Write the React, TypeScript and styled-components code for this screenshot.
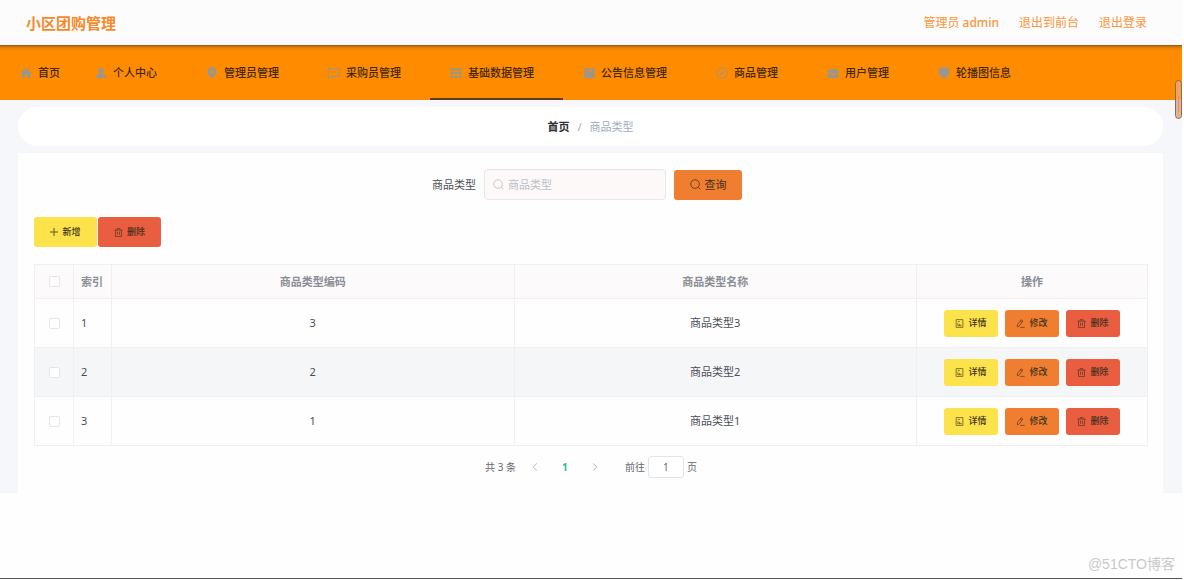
import React from "react";
import styled, { createGlobalStyle } from "styled-components";

const GlobalStyle = createGlobalStyle`
  * { box-sizing: border-box; }
  body {
    margin: 0;
    background: #fefefe;
    color: #4c4e53;
    font-family: "Noto Sans", "Noto Sans CJK SC", sans-serif;
    font-size: 11px;
    line-height: 16px;
  }
  button, input { font: inherit; }
  a { color: inherit; text-decoration: none; }
`;

const Page = styled.div`
  position: relative;
  display: flex;
  flex-direction: column;
  min-height: 100vh;
  padding-right: 2px;
`;

const Header = styled.header`
  display: flex;
  align-items: center;
  justify-content: space-between;
  height: 45px;
  padding: 0 35px 0 26px;
  background: #fcfcfd;
`;

const Brand = styled.h1`
  margin: 0;
  color: #f58a2b;
  font-size: 15px;
  font-weight: 700;
`;

const Account = styled.div`
  display: flex;
  gap: 20px;
  padding-top: 1px;
  color: #f9953c;
  font-size: 12px;
`;

const AdminName = styled.span`
  font-weight: 500;
`;

const Nav = styled.nav`
  display: flex;
  height: 55px;
  background: linear-gradient(#875714 0, #d97a0a 2px, #f58803 4px, #ff8c00 7px);
`;

const NavItem = styled.a<{ $active?: boolean; $home?: boolean }>`
  display: flex;
  align-items: center;
  gap: 6px;
  padding: 3px ${(p) => (p.$home ? 15 : 17)}px 0 20px;
  border-bottom: 2px solid ${(p) => (p.$active ? "#5f3d18" : "transparent")};
  color: #43280a;
  font-weight: 500;
  white-space: nowrap;
`;

const NavIcon = styled.svg`
  width: 12px;
  height: 12px;
  color: #9b968c;
`;

const NavArrow = styled.svg`
  width: 6px;
  height: 6px;
  color: #f38e12;
`;

const Main = styled.main`
  display: flex;
  flex-direction: column;
  gap: 7px;
  padding: 7px 19px 0 18px;
  background: #f6f7fa;
`;

const Breadcrumb = styled.div`
  display: flex;
  align-items: center;
  justify-content: center;
  gap: 8px;
  height: 39px;
  border-radius: 20px;
  background: #fff;
  color: #a3abc2;
`;

const Crumb = styled.a`
  color: #303133;
  font-weight: 700;
`;

const Panel = styled.section`
  padding: 16px 15px 15px 16px;
  background: #fefefe;
`;

const SearchForm = styled.form`
  display: flex;
  align-items: center;
  justify-content: center;
  gap: 8px;
  padding-right: 8px;
`;

const SearchBox = styled.div`
  display: flex;
  align-items: center;
  gap: 4px;
  width: 182px;
  height: 31px;
  padding: 0 8px;
  border: 1px solid #e9e7ea;
  border-radius: 4px;
  background: #fdf9f9;
  color: #b4b7be;
`;

const SearchInput = styled.input`
  flex: 1;
  min-width: 0;
  padding: 0;
  border: 0;
  outline: 0;
  background: transparent;
  color: #55575c;
  &::placeholder { color: #bcc0c8; opacity: 1; }
`;

const tones = { yellow: "#fde34b", orange: "#f07e30", red: "#e95e40" };
const sizes = {
  search: { width: 68, height: 30, font: 11, weight: 400 },
  tool: { width: 63, height: 30, font: 9, weight: 500 },
  row: { width: 54, height: 27, font: 9, weight: 500 },
};

const Button = styled.button<{ $tone: keyof typeof tones; $size: keyof typeof sizes }>`
  display: inline-flex;
  align-items: center;
  justify-content: center;
  gap: 4px;
  width: ${(p) => sizes[p.$size].width}px;
  height: ${(p) => sizes[p.$size].height}px;
  padding: 0;
  border: 0;
  border-radius: 3px;
  background: ${(p) => tones[p.$tone]};
  color: #40301c;
  font-size: ${(p) => sizes[p.$size].font}px;
  font-weight: ${(p) => sizes[p.$size].weight};
`;

const LineIcon = styled.svg<{ $size: number }>`
  flex: none;
  width: ${(p) => p.$size}px;
  height: ${(p) => p.$size}px;
  fill: none;
  stroke: currentColor;
  stroke-width: 1;
  opacity: 0.8;
`;

const Toolbar = styled.div`
  display: flex;
  gap: 1px;
  margin: 17px 0;
`;

const Table = styled.table`
  width: 100%;
  border-collapse: collapse;
  table-layout: fixed;
`;

const HeadCell = styled.th<{ $left?: boolean }>`
  height: 34px;
  padding: 0 7px;
  border: 1px solid #f0f0f3;
  background: #fcfafb;
  color: #8b8e95;
  font-weight: 700;
  text-align: ${(p) => (p.$left ? "left" : "center")};
  white-space: nowrap;
`;

const Row = styled.tr`
  &:nth-child(even) { background: #f5f6f8; }
`;

const Cell = styled.td<{ $left?: boolean }>`
  height: 49px;
  padding: 0 7px;
  border: 1px solid #f0f0f3;
  text-align: ${(p) => (p.$left ? "left" : "center")};
`;

const Tick = styled.input`
  display: block;
  appearance: none;
  width: 11px;
  height: 11px;
  margin: 0 auto;
  border: 1px solid #e6e6ea;
  border-radius: 2px;
  background: #fff;
`;

const Actions = styled.div`
  display: flex;
  justify-content: center;
  gap: 7px;
`;

const Pagination = styled.div`
  display: flex;
  align-items: center;
  justify-content: center;
  margin-top: 10px;
  color: #66686d;
  font-size: 10px;
`;

const PageButton = styled.button<{ $current?: boolean }>`
  display: flex;
  align-items: center;
  justify-content: center;
  width: 30px;
  height: 22px;
  padding: 0;
  border: 0;
  background: transparent;
  color: ${(p) => (p.$current ? "#1fc08c" : "#a0a3aa")};
  font-weight: ${(p) => (p.$current ? 700 : 400)};
`;

const PageSteps = styled.div`
  display: flex;
  margin: 0 15px 0 4px;
`;

const Jump = styled.label`
  display: flex;
  align-items: center;
  gap: 3px;
`;

const JumpInput = styled.input`
  width: 36px;
  height: 22px;
  padding: 0;
  border: 1px solid #e3e4e8;
  border-radius: 3px;
  background: #fff;
  color: #66686d;
  text-align: center;
`;

const Footer = styled.footer`
  display: flex;
  flex: 1;
  align-items: flex-end;
  justify-content: flex-end;
  margin-bottom: 1px;
  padding: 0 7px 5px 0;
  border-bottom: 1px solid #555;
  color: #c9c9c9;
  font-family: "Liberation Sans", "Noto Sans CJK SC", sans-serif;
  font-size: 14px;
  line-height: 18px;
`;

const ScrollThumb = styled.div`
  position: absolute;
  top: 80px;
  right: 2px;
  width: 7px;
  height: 39px;
  border: 1px solid #8a6a4a;
  border-radius: 4px;
  background:
    linear-gradient(transparent 35%, #f5824a 45% 75%, transparent) center / 1px 100% no-repeat,
    linear-gradient(#f2a45c 0 48%, #dcb8a4 52%);
`;

const SearchIcon = ({ size }: { size: number }) => (
  <LineIcon $size={size} viewBox="0 0 12 12" aria-hidden="true">
    <circle cx="5.5" cy="5.5" r="4.7" />
    <path d="M9 9l2.3 2.3" />
  </LineIcon>
);

const PlusIcon = () => (
  <LineIcon $size={8} viewBox="0 0 8 8" aria-hidden="true">
    <path d="M4 0v8M0 4h8" />
  </LineIcon>
);

const TrashIcon = () => (
  <LineIcon $size={9} viewBox="0 0 12 12" aria-hidden="true">
    <path d="M.5 2.8h11M4 2.5V.8h4v1.7M2 3v8.3h8V3M4.7 5v4M7.3 5v4" />
  </LineIcon>
);

const DetailIcon = () => (
  <LineIcon $size={9} viewBox="0 0 12 12" aria-hidden="true">
    <path d="M1.5.8h9v10.4h-9zM3.5 3.5h3M3.8 9V5.5M6 9V6.5M3.8 9h4.7M8 9V7.5" />
  </LineIcon>
);

const EditIcon = () => (
  <LineIcon $size={9} viewBox="0 0 12 12" aria-hidden="true">
    <path d="M6.8 1l2.4 1.6-4.7 6.6-2.7 1.2.2-3zM5.6 2.7L8 4.4M5.5 11.2h6" />
  </LineIcon>
);

const ChevronIcon = ({ next }: { next?: boolean }) => (
  <LineIcon $size={8} viewBox="0 0 8 8" aria-hidden="true">
    <path d={next ? "M2.2.5L5.8 4 2.2 7.5" : "M5.8.5L2.2 4l3.6 3.5"} />
  </LineIcon>
);

const line = { fill: "none", stroke: "currentColor", strokeWidth: 1 };
const solid = { fill: "currentColor" };

const navItems = [
  { label: "首页", icon: <path {...solid} d="M6 .8L.3 6l.9 1 .6-.5V11h3V7.6h2.4V11h3V6.5l.6.5.9-1z" /> },
  { label: "个人中心", icon: <path {...solid} d="M6 .7a2.800 2.800 0 0 1 1.600 5.100V7c2 .4 3.700 1.200 3.900 4H.5c.2-2.800 1.900-3.600 3.900-4V5.800A2.800 2.800 0 0 1 6 .7z" /> },
  { label: "管理员管理", icon: <path {...solid} fillRule="evenodd" d="M6 .3a4.700 4.700 0 0 1 4.700 4.700C10.700 7.500 7.500 9.800 6 11.800 4.500 9.800 1.300 7.500 1.300 5A4.700 4.700 0 0 1 6 .3zM6 3.700a1.300 1.300 0 1 0 0 2.600 1.300 1.300 0 0 0 0-2.600z" /> },
  { label: "采购员管理", icon: <path {...line} d="M.5 1.500h11v8h-8l-3 2zM3.500 5.500h.8M5.600 5.500h.8M7.700 5.500h.8" /> },
  { label: "基础数据管理", icon: <path {...solid} d="M.5 1h3v2.700h-3zM4.500 1h3v2.700h-3zM8.500 1h3v2.700h-3zM.5 4.700h3v2.700h-3zM4.500 4.700h3v2.700h-3zM8.500 4.700h3v2.700h-3zM.5 8.400h3v2.700h-3zM4.500 8.400h3v2.700h-3zM8.500 8.400h3v2.700h-3z" /> },
  { label: "公告信息管理", icon: <path {...solid} d="M1 .8h1.500v10.400H1zM3.200.8h2.600v4L7.400 3.600 9 4.800v-4h2.500v10.400H3.200zM6.500.8h1.800v2.400l-.9-.6-.9.6z" /> },
  { label: "商品管理", icon: <><circle {...line} cx="6" cy="6" r="5.300" /><path {...solid} d="M9 3L7 7 3.500 8.500 5.200 5z" opacity=".8" /></> },
  { label: "用户管理", icon: <path {...solid} d="M3.500 3V1.300h5V3h3v3.400H.5V3zM4.600 3h2.800v-.7H4.600zM.5 7.200H5V8h2v-.8h4.500V11H.5z" /> },
  { label: "轮播图信息", icon: <path {...solid} d="M2 .6h8L11.300 2v5L10 8.800H7.500v1h2v1.400h-7V9.800h2v-1H2L.7 7V2z" /> },
];

const rows = [
  { index: 1, code: 3, name: "商品类型3" },
  { index: 2, code: 2, name: "商品类型2" },
  { index: 3, code: 1, name: "商品类型1" },
];

export default function App() {
  return (
    <>
      <GlobalStyle />
      <Page lang="zh-CN">
        <Header>
          <Brand>小区团购管理</Brand>
          <Account>
            <span>管理员 <AdminName>admin</AdminName></span>
            <a href="#front">退出到前台</a>
            <a href="#logout">退出登录</a>
          </Account>
        </Header>
        <Nav>
          {navItems.map(({ label, icon }, i) => (
            <NavItem key={label} href="#" $home={i === 0} $active={label === "基础数据管理"}>
              <NavIcon viewBox="0 0 12 12" aria-hidden="true">{icon}</NavIcon>
              {label}
              {i > 0 && (
                <NavArrow viewBox="0 0 6 6" aria-hidden="true">
                  <path {...line} d="M.5 2L3 4.500 5.500 2" />
                </NavArrow>
              )}
            </NavItem>
          ))}
        </Nav>
        <Main>
          <Breadcrumb>
            <Crumb href="#">首页</Crumb>
            <span>/</span>
            <span>商品类型</span>
          </Breadcrumb>
          <Panel>
            <SearchForm onSubmit={(e) => e.preventDefault()}>
              <label htmlFor="type">商品类型</label>
              <SearchBox>
                <SearchIcon size={11} />
                <SearchInput id="type" placeholder="商品类型" />
              </SearchBox>
              <Button type="submit" $tone="orange" $size="search">
                <SearchIcon size={11} />
                查询
              </Button>
            </SearchForm>
            <Toolbar>
              <Button type="button" $tone="yellow" $size="tool"><PlusIcon />新增</Button>
              <Button type="button" $tone="red" $size="tool"><TrashIcon />删除</Button>
            </Toolbar>
            <Table>
              <colgroup>
                <col style={{ width: 39 }} />
                <col style={{ width: 38 }} />
                <col />
                <col />
                <col style={{ width: 231 }} />
              </colgroup>
              <thead>
                <tr>
                  <HeadCell><Tick type="checkbox" aria-label="全选" /></HeadCell>
                  <HeadCell $left>索引</HeadCell>
                  <HeadCell>商品类型编码</HeadCell>
                  <HeadCell>商品类型名称</HeadCell>
                  <HeadCell>操作</HeadCell>
                </tr>
              </thead>
              <tbody>
                {rows.map((row) => (
                  <Row key={row.index}>
                    <Cell><Tick type="checkbox" aria-label={row.name} /></Cell>
                    <Cell $left>{row.index}</Cell>
                    <Cell>{row.code}</Cell>
                    <Cell>{row.name}</Cell>
                    <Cell>
                      <Actions>
                        <Button type="button" $tone="yellow" $size="row"><DetailIcon />详情</Button>
                        <Button type="button" $tone="orange" $size="row"><EditIcon />修改</Button>
                        <Button type="button" $tone="red" $size="row"><TrashIcon />删除</Button>
                      </Actions>
                    </Cell>
                  </Row>
                ))}
              </tbody>
            </Table>
            <Pagination>
              <span>共 3 条</span>
              <PageSteps>
                <PageButton type="button" aria-label="上一页"><ChevronIcon /></PageButton>
                <PageButton type="button" $current>1</PageButton>
                <PageButton type="button" aria-label="下一页"><ChevronIcon next /></PageButton>
              </PageSteps>
              <Jump>
                前往
                <JumpInput defaultValue="1" />
                页
              </Jump>
            </Pagination>
          </Panel>
        </Main>
        <Footer>@51CTO博客</Footer>
        <ScrollThumb />
      </Page>
    </>
  );
}
